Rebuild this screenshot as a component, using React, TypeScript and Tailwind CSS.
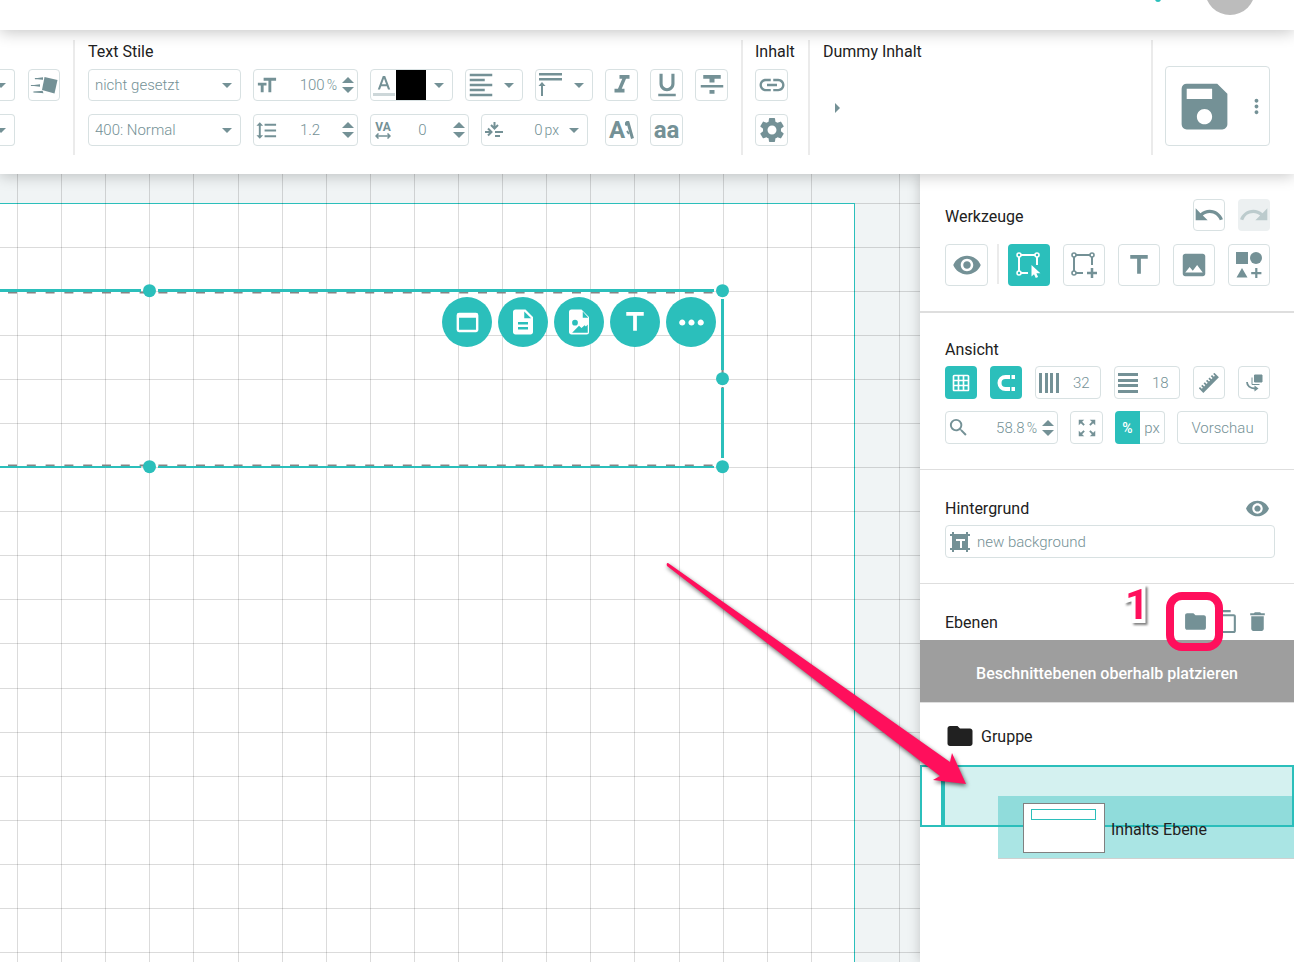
import React from "react";
import {
  MdContentCopy,
  MdDelete,
  MdDescription,
  MdFolder,
  MdFormatAlignLeft,
  MdFormatItalic,
  MdFormatLineSpacing,
  MdFormatSize,
  MdFormatStrikethrough,
  MdFormatUnderlined,
  MdGridOn,
  MdImage,
  MdLink,
  MdMoreHoriz,
  MdMoreVert,
  MdRedo,
  MdRemoveRedEye,
  MdSave,
  MdSearch,
  MdSettings,
  MdTitle,
  MdUndo,
  MdWebAsset,
  MdZoomOutMap,
} from "react-icons/md";

const box = "flex items-center rounded-sm border border-[#d8e1e2] bg-white text-[#749196]";
const active = "flex items-center justify-center rounded-sm bg-[#2bbfbb] text-white";

function Caret() {
  return (
    <svg width="10" height="5" viewBox="0 0 10 5" fill="currentColor" className="shrink-0">
      <path d="M0 0h10L5 5z" />
    </svg>
  );
}

function Stepper({ label }: { label: string }) {
  return (
    <span className="flex shrink-0 flex-col gap-1">
      <button aria-label={`${label} +`}>
        <svg width="12" height="6" viewBox="0 0 12 6" fill="currentColor" className="block">
          <path d="M6 0l6 6H0z" />
        </svg>
      </button>
      <button aria-label={`${label} -`}>
        <svg width="12" height="6" viewBox="0 0 12 6" fill="currentColor" className="block">
          <path d="M0 0h12L6 6z" />
        </svg>
      </button>
    </span>
  );
}

type IconButtonProps = {
  label: string;
  className?: string;
  children: React.ReactNode;
};

function IconButton({ label, className = "h-8 w-[33px]", children }: IconButtonProps) {
  return (
    <button aria-label={label} className={`${box} shrink-0 justify-center ${className}`}>
      {children}
    </button>
  );
}

function Select({ label, value, className = "w-[153px]" }: { label: string; value: string; className?: string }) {
  return (
    <span className={`${box} relative h-8 shrink-0 ${className}`}>
      <select
        aria-label={label}
        defaultValue={value}
        className="h-full w-full appearance-none bg-transparent pl-1.5 text-[15px] font-light outline-none"
      >
        <option>{value}</option>
      </select>
      <span className="pointer-events-none absolute right-2">
        <Caret />
      </span>
    </span>
  );
}

type NumberFieldProps = {
  label: string;
  value: string;
  unit?: string;
  icon: React.ReactNode;
  end?: React.ReactNode;
  className: string;
  inputClass?: string;
};

function NumberField({ label, value, unit, icon, end, className, inputClass = "text-right" }: NumberFieldProps) {
  return (
    <div className={`${box} shrink-0 px-[3px] text-[15px] font-light ${className}`}>
      <span className="shrink-0">{icon}</span>
      <input
        aria-label={label}
        defaultValue={value}
        className={`w-0 min-w-0 flex-1 bg-transparent outline-none ${inputClass}`}
      />
      {unit && <span className="ml-0.5 text-sm">{unit}</span>}
      {end}
    </div>
  );
}

function MotionIcon() {
  return (
    <svg width="28" height="20" viewBox="0 0 28 20" fill="currentColor" className="shrink-0">
      <path d="M14.500 2L27.500 5l-3 13.500-12.500-3.500z" />
      <path d="M4 3.500l9-1.200v2.400zM0 10.500l10-1.200v2.400zM2.500 17l10-1.200 1 2.400z" />
      <path d="M5 3h8v1.200H5zM1 9.900h9v1.200H1zM3.500 16.400h9v1.200h-9z" />
    </svg>
  );
}

function TextColorIcon() {
  return (
    <svg width="22" height="24" viewBox="0 0 22 24" fill="currentColor" className="shrink-0">
      <path d="M9.800 3h2.400l5 13.500h-2.200l-1.200-3.300H8.200L7 16.500H4.800zM8.900 11.200h4.200L11 5.500z" />
      <path d="M0 20h22v3H0z" opacity=".36" />
    </svg>
  );
}

function AlignTopIcon() {
  return (
    <svg width="24" height="24" viewBox="0 0 24 24" fill="currentColor" className="shrink-0">
      <path d="M1 0h23v2.500H1zM1 5h23v2.500H1zM3 12h2v11H3z" />
      <path d="M4 9l3.500 4h-7z" />
    </svg>
  );
}

function KerningIcon() {
  return (
    <span className="flex w-[18px] flex-col items-center">
      <span className="text-xs leading-3 font-bold">VA</span>
      <svg width="16" height="6" viewBox="0 0 16 6" fill="none" stroke="currentColor" strokeWidth="1.500">
        <path d="M1 3h14M3.500.5L1 3l2.500 2.500M12.500.5L15 3l-2.500 2.500" />
      </svg>
    </span>
  );
}

function IndentIcon() {
  return (
    <svg width="18" height="18" viewBox="0 0 18 18" fill="none" stroke="currentColor" strokeWidth="2">
      <path d="M9.500 1v6M6 4l3.500 3.500L13 4M0 11h6M3 7.500L6.500 11 3 14.500M10 11h8M10 15h5" />
    </svg>
  );
}

function FrameIcon({ kind }: { kind: "cursor" | "plus" }) {
  return (
    <svg width="26" height="26" viewBox="0 0 26 26" fill="none" stroke="currentColor" strokeWidth="2">
      <path d="M3 5v14M5 3h14M21 5v8M5 21h7" />
      <circle cx="3" cy="3" r="2" strokeWidth="1.600" />
      <circle cx="21" cy="3" r="2" strokeWidth="1.600" />
      <circle cx="3" cy="21" r="2" strokeWidth="1.600" />
      {kind === "cursor" ? (
        <path d="M15.500 13v11.500l2.500-2.300 1.800 3.800 2.300-1.100-1.700-3.600h4z" fill="currentColor" stroke="none" />
      ) : (
        <path d="M21 16v10M16 21h10" strokeWidth="2.500" />
      )}
    </svg>
  );
}

function ShapesIcon() {
  return (
    <svg width="26" height="26" viewBox="0 0 26 26" fill="currentColor">
      <path d="M0 0h12v12H0zM6 16l5.500 9.500H.5zM19.200 16h2.200v4h4v2.200h-4v4h-2.200v-4h-4V20h4z" />
      <circle cx="20" cy="6" r="6" />
    </svg>
  );
}

function MagnetIcon() {
  return (
    <svg width="18" height="16" viewBox="0 0 18 16" fill="currentColor">
      <path d="M13 0v4H8.500a4 4 0 0 0 0 8H13v4H8.500a8 8 0 0 1 0-16zM14.500 0H18v4h-3.500zM14.500 12H18v4h-3.500z" />
    </svg>
  );
}

function BarsIcon({ vertical = false }: { vertical?: boolean }) {
  return (
    <svg width="20" height="20" viewBox="0 0 20 20" fill="currentColor">
      {vertical ? (
        <path d="M0 0h3v20H0zM6 0h3v20H6zM11 0h3v20h-3zM17 0h3v20h-3z" />
      ) : (
        <path d="M0 0h20v3H0zM0 6h20v3H0zM0 11h20v3H0zM0 17h20v3H0z" />
      )}
    </svg>
  );
}

function RulerIcon() {
  return (
    <svg width="20" height="20" viewBox="0 0 20 20" fill="currentColor">
      <g transform="rotate(-45 10 10)">
        <path d="M-1 6.500h1.800v2.500h1.600V6.500h1.800v2.500h1.600V6.500h1.800v2.500h1.600V6.500h1.800v2.500h1.600V6.500h1.800v2.500H16V6.500h1.800v2.500h1.600V6.500H21v6.500H-1z" />
      </g>
    </svg>
  );
}

function RotateLayersIcon() {
  return (
    <svg width="17" height="18" viewBox="0 0 17 18" fill="none" stroke="currentColor">
      <path d="M8.500 1h7.500v7H8.500z" fill="currentColor" />
      <path d="M6 3.500v7H13.500" />
      <path d="M1 8c0 3.500 3 6.500 8 6.500" strokeWidth="1.800" />
      <path d="M8.500 11.500l4 3-4 3z" fill="currentColor" stroke="none" />
    </svg>
  );
}

function BackgroundIcon() {
  return (
    <svg width="20" height="20" viewBox="0 0 20 20" fill="none" stroke="currentColor">
      <path d="M3 3h14v14H3z" fill="currentColor" />
      <path d="M0 3h20M0 17h20M3 0v20M17 0v20" strokeWidth="2" />
      <path d="M6 8h9M11 8v8" stroke="#fff" strokeWidth="2" />
    </svg>
  );
}

function FileImageIcon() {
  return (
    <svg width="30" height="30" viewBox="0 0 24 24" fill="currentColor">
      <path
        fillRule="evenodd"
        d="M6 2a2 2 0 0 0-2 2v16c0 1.100.9 2 2 2h12a2 2 0 0 0 2-2V8l-6-6zm9 1.500V8.500h4.500zM8.800 10.200a2.300 2.300 0 1 1 0 4.600 2.300 2.300 0 0 1 0-4.600zM6.500 20.500l5.500-5.500 2 1.800 2.500-2.300 1 1 1.500-1.500v6.500z"
      />
    </svg>
  );
}

const quickActions = [
  { label: "Container", icon: <MdWebAsset size={29} /> },
  { label: "Inhalt", icon: <MdDescription size={30} /> },
  { label: "Bild", icon: <FileImageIcon /> },
  { label: "Text", icon: <MdTitle size={30} /> },
  { label: "Mehr", icon: <MdMoreHoriz size={37} /> },
];

const handles = [
  [149, 290],
  [722, 290],
  [722, 378],
  [722, 466],
  [149, 466],
];

const gridLines = Array.from({ length: 70 }, (_, i) => i);

function Canvas() {
  return (
    <main className="relative flex-1 overflow-hidden bg-[#f0f4f5]">
      {/* sheet */}
      <div className="absolute top-[29px] bottom-0 left-0 w-[855px] border-t border-r border-[#2bbfbb] bg-white" />
      <svg className="absolute inset-0 h-full w-full" shapeRendering="crispEdges">
        {gridLines.map((i) => {
          const x = Math.round(17 + i * 44.1);
          const y = Math.round(73 + i * 44.05);
          return (
            <g key={i} fill="#000" fillOpacity=".14">
              {i !== 19 && <rect x={x} y="0" width="1" height="100%" />}
              <rect x="0" y={y} width="100%" height="1" />
            </g>
          );
        })}
        <rect x="855" y="29" width="100%" height="1" fill="#000" fillOpacity=".14" />
      </svg>
      {/* selected box, drawn in window coordinates below the 174px header */}
      <svg className="absolute inset-0 h-full w-full">
        <g transform="translate(0 -174)">
          <path d="M8 292.500h706M8 465.500h706" stroke="#858585" strokeWidth="2" strokeDasharray="9 9.800" />
          <path d="M722.500 290v177" stroke="#858585" strokeWidth="2" />
          <path d="M722.500 297v2M722.500 385v2M722.500 458v4" stroke="#fff" strokeWidth="3" />
          <path d="M0 290.500h141M158 290.500h556M722.500 299v71M722.500 388v70" stroke="#2bbfbb" strokeWidth="3" />
          <path d="M0 467h141M158 467h556" stroke="#2bbfbb" strokeWidth="2" />
          {handles.map(([x, y]) => (
            <circle key={`${x}-${y}`} cx={x + 0.5} cy={y + 0.7} r="6.500" fill="#2bbfbb" />
          ))}
        </g>
      </svg>
      <div className="absolute top-[123px] left-[442px] flex gap-1.5">
        {quickActions.map((a) => (
          <button
            key={a.label}
            aria-label={a.label}
            className="flex size-[50px] items-center justify-center rounded-full bg-[#2bbfbb] text-white"
          >
            {a.icon}
          </button>
        ))}
      </div>
    </main>
  );
}

function Group({ title, className, children }: { title: string; className: string; children: React.ReactNode }) {
  return (
    <section className={`border-l-2 border-[#ebebeb] ${className}`}>
      <h2 className="h-6 leading-6">{title}</h2>
      {children}
    </section>
  );
}

function Toolbar() {
  return (
    <div className="relative z-10 flex bg-white pt-2.5 pr-6 pb-[19px] shadow-[0_2px_14px_rgba(0,0,0,0.22)]">
      <div className="flex h-[115px] w-[73px] shrink-0 gap-[13px] pt-[29px]">
        <div className="flex flex-col gap-[13px]">
          <Select label="Position" value="" className="w-[15px] rounded-l-none border-l-0" />
          <Select label="Ausrichtung" value="" className="w-[15px] rounded-l-none border-l-0" />
        </div>
        <IconButton label="Animation" className="h-8 w-8">
          <MotionIcon />
        </IconButton>
      </div>

      <Group title="Text Stile" className="w-[668px] shrink-0 pl-[13px]">
        <div className="mt-[5px] flex gap-3">
          <Select label="Schriftart" value="nicht gesetzt" />
          <NumberField
            label="Schriftgröße"
            value="100"
            unit="%"
            icon={<MdFormatSize size={23} className="-ml-0.5" />}
            end={<span className="ml-[5px] flex"><Stepper label="Schriftgröße" /></span>}
            className="h-8 w-[105px]"
          />
          <button aria-label="Textfarbe" className={`${box} h-8 w-[83px] shrink-0 pl-0.5`}>
            <TextColorIcon />
            <span className="ml-px h-[30px] w-[30px] bg-black" />
            <span className="ml-2">
              <Caret />
            </span>
          </button>
          <button aria-label="Ausrichtung horizontal" className={`${box} h-8 w-[58px] shrink-0 gap-2`}>
            <MdFormatAlignLeft size={30} />
            <Caret />
          </button>
          <button aria-label="Ausrichtung vertikal" className={`${box} h-8 w-[58px] shrink-0 gap-3 pl-0.5`}>
            <AlignTopIcon />
            <Caret />
          </button>
          <IconButton label="Kursiv">
            <MdFormatItalic size={30} />
          </IconButton>
          <IconButton label="Unterstrichen">
            <MdFormatUnderlined size={30} />
          </IconButton>
          <IconButton label="Durchgestrichen">
            <MdFormatStrikethrough size={30} />
          </IconButton>
        </div>
        <div className="mt-[13px] flex gap-3">
          <Select label="Schriftstärke" value="400: Normal" />
          <NumberField
            label="Zeilenhöhe"
            value="1.2"
            icon={<MdFormatLineSpacing size={23} className="-ml-0.5" />}
            end={<Stepper label="Zeilenhöhe" />}
            className="h-8 w-[105px]"
            inputClass="text-center"
          />
          <NumberField
            label="Zeichenabstand"
            value="0"
            icon={<KerningIcon />}
            end={<Stepper label="Zeichenabstand" />}
            className="h-8 w-[99px]"
            inputClass="text-center"
          />
          <NumberField
            label="Einzug"
            value="0"
            unit="px"
            icon={<IndentIcon />}
            end={<span className="ml-2.5 pr-[5px]"><Caret /></span>}
            className="mr-[5px] h-8 w-[107px]"
          />
          <IconButton label="Großbuchstaben">
            <span className="text-2xl leading-none font-bold">A</span>
            <svg width="9" height="18" viewBox="0 0 9 18" fill="none" stroke="currentColor" className="shrink-0">
              <path d="M.5 4.500Q1.500 1 3 1.500L7.500 17.500" strokeWidth="3" />
              <path d="M2 10l2 3" strokeWidth="2" />
            </svg>
          </IconButton>
          <IconButton label="Kleinbuchstaben">
            <span className="text-2xl leading-none font-bold">aa</span>
          </IconButton>
        </div>
      </Group>

      <Group title="Inhalt" className="w-[67px] shrink-0 pl-3">
        <div className="mt-[5px] flex flex-col gap-[13px]">
          <IconButton label="Link">
            <MdLink size={30} />
          </IconButton>
          <IconButton label="Einstellungen">
            <MdSettings size={30} />
          </IconButton>
        </div>
      </Group>

      <Group title="Dummy Inhalt" className="min-w-0 flex-1 pl-[13px]">
        <button aria-label="Dummy Inhalt öffnen" className="mt-[39px] ml-3 block text-[#749196]">
          <svg width="5" height="10" viewBox="0 0 5 10" fill="currentColor">
            <path d="M0 0l5 5-5 5z" />
          </svg>
        </button>
      </Group>

      <div className="shrink-0 border-l-2 border-[#ebebeb] pt-[26px] pl-3">
        <div className={`${box} h-20 w-[105px] pl-2`}>
          <button aria-label="Speichern">
            <MdSave size={61} />
          </button>
          <button aria-label="Weitere Optionen" className="ml-2.5">
            <MdMoreVert size={23} />
          </button>
        </div>
      </div>
    </div>
  );
}

function Sidebar() {
  return (
    <aside className="relative w-[374px] shrink-0 bg-white shadow-[0_0_12px_rgba(0,0,0,0.2)]">
      <section className="border-b-2 border-[#dedede] pt-[25px] pr-6 pb-[25px] pl-[25px]">
        <div className="flex h-8 items-center gap-[13px]">
          <h2 className="flex-1 pt-[3px]">Werkzeuge</h2>
          <IconButton label="Rückgängig" className="size-8">
            <MdUndo size={32} className="shrink-0" />
          </IconButton>
          <button
            aria-label="Wiederholen"
            disabled
            className="flex size-8 items-center justify-center rounded-sm bg-[#ecf0f1] text-[#bccbcd]"
          >
            <MdRedo size={32} />
          </button>
        </div>
        <div className="mt-[13px] flex justify-between">
          <IconButton label="Sichtbarkeit" className="h-[42px] w-[43px]">
            <MdRemoveRedEye size={30} />
          </IconButton>
          <span className="-mx-1 h-10 w-0.5 bg-[#ebebeb]" />
          <button aria-label="Auswählen" className={`${active} size-[42px]`}>
            <FrameIcon kind="cursor" />
          </button>
          <IconButton label="Rahmen" className="size-[42px]">
            <FrameIcon kind="plus" />
          </IconButton>
          <IconButton label="Text" className="size-[42px]">
            <MdTitle size={30} />
          </IconButton>
          <IconButton label="Bild" className="size-[42px]">
            <MdImage size={30} />
          </IconButton>
          <IconButton label="Formen" className="size-[42px]">
            <ShapesIcon />
          </IconButton>
        </div>
      </section>

      <section className="border-b border-[#dedede] pt-[25px] pr-6 pb-[25px] pl-[25px]">
        <h2>Ansicht</h2>
        <div className="mt-1 flex gap-[13px]">
          <button aria-label="Raster" className={`${active} h-[33px] w-8`}>
            <MdGridOn size={20} />
          </button>
          <button aria-label="Einrasten" className={`${active} h-[33px] w-8`}>
            <MagnetIcon />
          </button>
          <NumberField
            label="Spalten"
            value="32"
            icon={<BarsIcon vertical />}
            className="h-[33px] w-[66px]"
            inputClass="pl-3.5"
          />
          <NumberField
            label="Zeilen"
            value="18"
            icon={<BarsIcon />}
            className="h-[33px] w-[66px]"
            inputClass="pl-3.5"
          />
          <IconButton label="Lineal" className="h-[33px] w-8">
            <RulerIcon />
          </IconButton>
          <IconButton label="Drehen" className="h-[33px] w-8">
            <RotateLayersIcon />
          </IconButton>
        </div>
        <div className="mt-3 flex gap-3">
          <NumberField
            label="Zoom"
            value="58.8"
            unit="%"
            icon={<MdSearch size={23} className="-ml-0.5" />}
            end={<span className="ml-[5px] flex"><Stepper label="Zoom" /></span>}
            className="h-[33px] w-[113px]"
          />
          <IconButton label="Einpassen" className="size-[33px]">
            <MdZoomOutMap size={22} />
          </IconButton>
          <div className="flex text-[15px]">
            <button className="h-[33px] w-[25px] rounded-l-sm bg-[#2bbfbb] text-sm font-medium text-white">%</button>
            <button className="h-[33px] w-[25px] rounded-r-sm border border-l-0 border-[#d8e1e2] font-light text-[#749196]">
              px
            </button>
          </div>
          <button className={`${box} h-[33px] w-[91px] justify-center text-[15px] font-light`}>Vorschau</button>
        </div>
      </section>

      <section className="border-b border-[#dedede] pt-[26px] pb-[25px] pl-[25px]">
        <div className="flex items-center justify-between pr-6 text-[#749196]">
          <h2 className="text-[#212121]">Hintergrund</h2>
          <button aria-label="Hintergrund anzeigen">
            <MdRemoveRedEye size={25} />
          </button>
        </div>
        <div className={`${box} mt-1 mr-[19px] h-[33px] gap-[7px] pl-1`}>
          <BackgroundIcon />
          <input
            aria-label="Hintergrund"
            defaultValue="new background"
            className="min-w-0 flex-1 bg-transparent text-[15px] font-light outline-none"
          />
        </div>
      </section>

      <section>
        <div className="relative flex h-14 items-center gap-1.5 pt-[19px] pr-6 pl-[25px] text-[#749196]">
          <h2 className="flex-1 pt-[3px] text-[#212121]">Ebenen</h2>
          <button aria-label="Gruppe anlegen">
            <MdFolder size={25} />
          </button>
          <button aria-label="Ebene duplizieren">
            <MdContentCopy size={25} />
          </button>
          <button aria-label="Ebene löschen">
            <MdDelete size={25} />
          </button>
          {/* step marker */}
          <span className="absolute top-2 right-[71px] h-[59px] w-[57px] rounded-2xl border-8 border-[#ff0f5c] bg-transparent" />
          <span className="absolute top-0 right-[145px] text-[42px] leading-[42px] font-bold text-[#ff0f5c] drop-shadow-[2px_2px_1px_rgba(0,0,0,0.5)] [-webkit-text-stroke:8px_white] [paint-order:stroke]">
            1
          </span>
        </div>
        <button className="h-[62px] w-full bg-[#9e9e9e] pt-1.5 text-center font-medium text-white">
          Beschnittebenen oberhalb platzieren
        </button>
        <div className="flex h-[63px] items-center gap-1.5 border-t border-[#dedede] pt-[3px] pl-[25px]">
          <MdFolder size={30} className="text-[#212121]" />
          <span className="pt-[3px]">Gruppe</span>
        </div>
        <div className="relative h-[62px] border-2 border-[#2bbfbb]">
          <div className="ml-[19px] h-full border-l-4 border-[#2bbfbb] bg-[#d4f1f0]" />
          {/* dragged layer */}
          <div className="absolute top-[29px] -right-0.5 flex h-[63px] w-[296px] items-center gap-1.5 border-b border-[#d0d0d0] bg-[#2bbfbb]/40 pt-0.5 pl-[25px]">
            <div className="h-[50px] w-[82px] border border-[#808080] bg-white pt-[5px] pl-[7px]">
              <div className="h-[11px] w-[65px] border border-[#2bbfbb]" />
            </div>
            <span className="pt-1">Inhalts Ebene</span>
          </div>
        </div>
      </section>

      <svg
        width="310"
        height="235"
        viewBox="0 0 310 235"
        className="pointer-events-none absolute top-[384px] -left-[258px] drop-shadow-[1px_2px_2px_rgba(0,0,0,0.6)]"
      >
        <path
          d="M6 5L288 204l2-9 14 31-33-4 7-4L5 8q-1-3 1-3z"
          fill="#ff0f5c"
        />
      </svg>
    </aside>
  );
}

export default function App() {
  return (
    <div className="flex min-h-screen flex-col bg-white font-[Roboto,sans-serif] text-base leading-6 text-[#212121]">
      <header className="relative z-20 bg-white shadow-[0_2px_16px_rgba(0,0,0,0.24)]">
        <div className="flex h-[30px] justify-end gap-11 overflow-hidden pr-[39px]">
          <span className="-mt-1 h-1.5 w-1.5 rounded-full bg-[#2bbfbb]" />
          <button aria-label="Profil" className="-mt-[35px] size-[50px] rounded-full bg-[#bcbcbc]" />
        </div>
      </header>
      <Toolbar />
      <div className="flex flex-1">
        <Canvas />
        <Sidebar />
      </div>
    </div>
  );
}
